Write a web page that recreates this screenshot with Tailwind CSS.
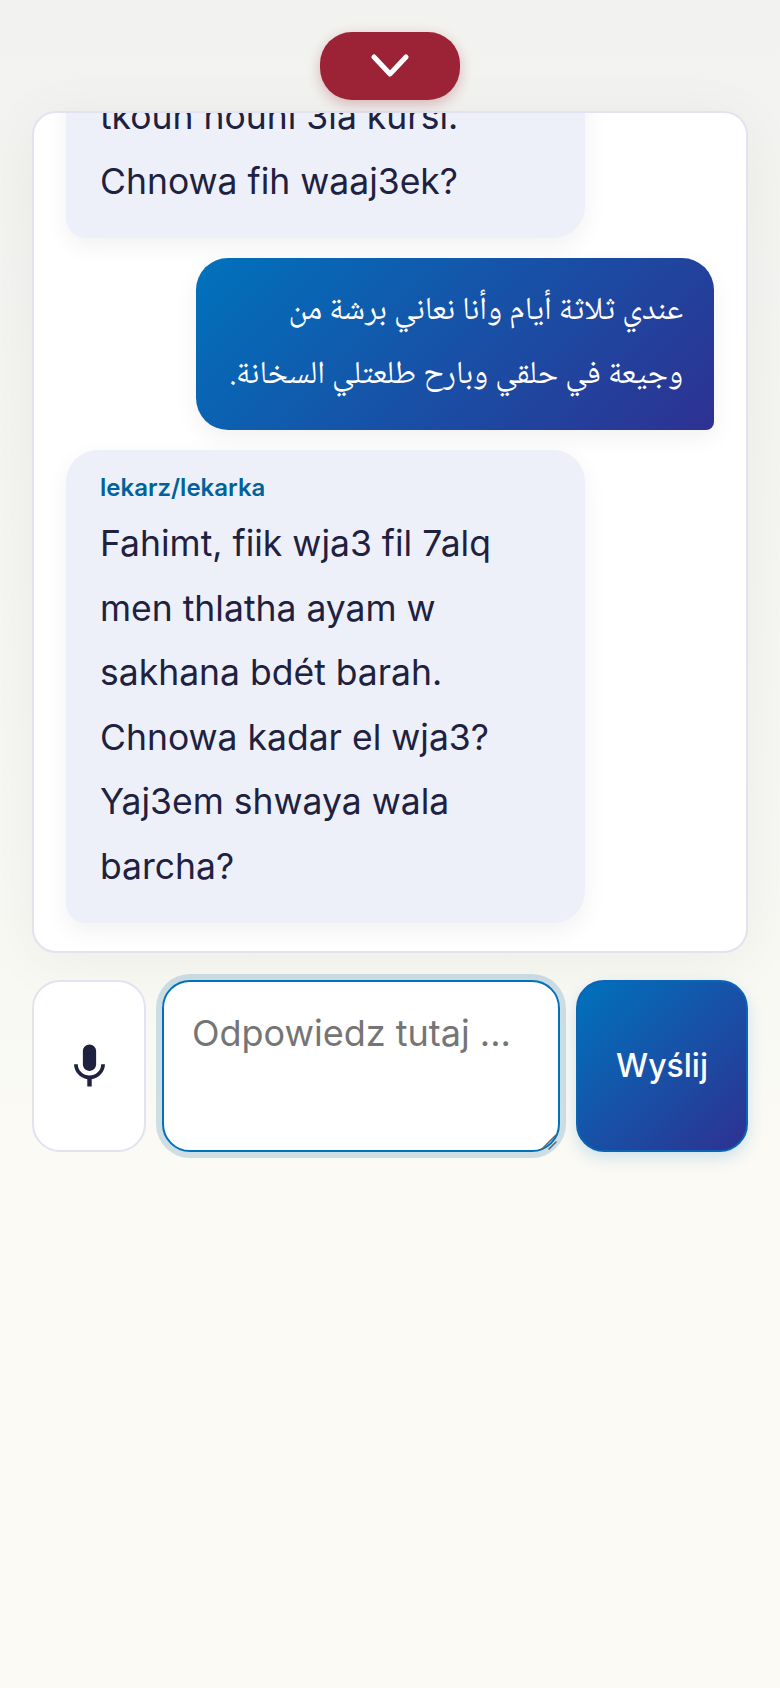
<!DOCTYPE html>
<html lang="pl">
<head>
<meta charset="utf-8">
<script src="https://cdn.jsdelivr.net/npm/@tailwindcss/browser@4"></script>
</head>
<body class="m-0 h-[1688px] overflow-hidden bg-[#fbfaf4] font-['Inter','Noto_Sans',sans-serif] text-[#1e2140]">
<main class="h-[1688px] bg-gradient-to-b from-[#f2f3f0] via-[#f7f8f3] via-50% to-[#fbfaf4] to-70% px-8 pt-8">
  <div class="flex justify-center">
    <button class="flex h-[68px] w-[140px] items-center justify-center rounded-[32px] bg-[#9b2335] shadow-[0_4px_14px_rgba(155,35,53,0.3)]" aria-label="Zwiń">
      <svg width="38" height="26" viewBox="0 0 38 26" fill="none" stroke="white" stroke-width="5" stroke-linecap="round" stroke-linejoin="round"><path d="M3 4 L19 21 L35 4"/></svg>
    </button>
  </div>
  <section class="mt-[11px] flex h-[842px] flex-col justify-end gap-5 overflow-hidden rounded-[24px] border-2 border-[#e2e2f0] bg-white px-8 pb-[28px] shadow-[0_8px_60px_rgba(0,0,0,0.05)]">
    <div class="w-[519px] shrink-0 rounded-[32px] rounded-bl-[20px] bg-[#edf0f9] px-[34px] pb-[24px] pt-[24px] text-[35.5px] leading-[64.5px] shadow-[0_8px_24px_rgba(0,0,0,0.06)]">
      <p>tkoun houni 3la kursi.</p>
      <p>Chnowa fih waaj3ek?</p>
    </div>
    <div dir="rtl" class="ml-auto w-[518px] shrink-0 rounded-[32px] bg-[linear-gradient(135deg,#0072bc,#2e3192)] py-[21.5px] pl-[26px] pr-[31px] font-['Noto_Naskh_Arabic',sans-serif] text-[32.2px] leading-[64.5px] text-white shadow-[0_8px_24px_rgba(0,0,0,0.06)]" style="border-bottom-right-radius:8px">
      عندي ثلاثة أيام وأنا نعاني برشة من وجيعة في حلقي وبارح طلعتلي السخانة.
    </div>
    <div class="w-[519px] shrink-0 rounded-[32px] rounded-bl-[20px] bg-[#edf0f9] px-[34px] pb-[24px] pt-[23px] shadow-[0_8px_24px_rgba(0,0,0,0.06)]">
      <p class="mb-[9px] text-[24px] font-semibold leading-[30px] text-[#00629b]">lekarz/lekarka</p>
      <p class="text-[35.5px] leading-[64.5px]">Fahimt, fiik wja3 fil 7alq men thlatha ayam w sakhana bdét barah. Chnowa kadar el wja3? Yaj3em shwaya wala barcha?</p>
    </div>
  </section>
  <div class="mt-[27px] flex h-[172px] gap-4">
    <button class="flex w-[114px] shrink-0 items-center justify-center rounded-[28px] border-2 border-[#e2e2f0] bg-white" aria-label="Mikrofon">
      <svg width="53" height="53" viewBox="0 0 24 24" fill="#1e2140"><path d="M12 14c1.66 0 3-1.34 3-3V5c0-1.66-1.34-3-3-3S9 3.34 9 5v6c0 1.66 1.34 3 3 3zm5.3-3c0 3-2.54 5.1-5.3 5.1S6.7 14 6.7 11H5c0 3.41 2.72 6.23 6 6.72V21h2v-3.28c3.28-.48 6-3.3 6-6.72h-1.7z"/></svg>
    </button>
    <div class="relative h-[172px] w-[398px] shrink-0">
      <textarea class="block h-[172px] w-[398px] resize-none rounded-[28px] border-2 border-[#0072bc] bg-white px-[28px] pb-[24px] pt-[26px] text-[36px] leading-[50px] shadow-[0_0_0_6px_rgba(0,98,155,0.18)] outline-none placeholder:text-[#757575]" placeholder="Odpowiedz tutaj ..."></textarea>
      <svg class="absolute bottom-[1px] right-[1px]" width="18" height="18" viewBox="0 0 18 18" fill="none" stroke-linecap="round"><path d="M1 16 L15 2" stroke="#5f6670" stroke-width="1.6"/><path d="M8 16 L15 9" stroke="#5f6670" stroke-width="1.6"/></svg>
    </div>
    <button class="h-[172px] w-[172px] shrink-0 rounded-[28px] border-2 border-[#0a66b5] bg-[linear-gradient(135deg,#0072bc,#2e3192)] text-[32px] font-medium text-white shadow-[0_6px_16px_rgba(0,114,188,0.18)]">Wyślij</button>
  </div>
</main>
</body>
</html>
